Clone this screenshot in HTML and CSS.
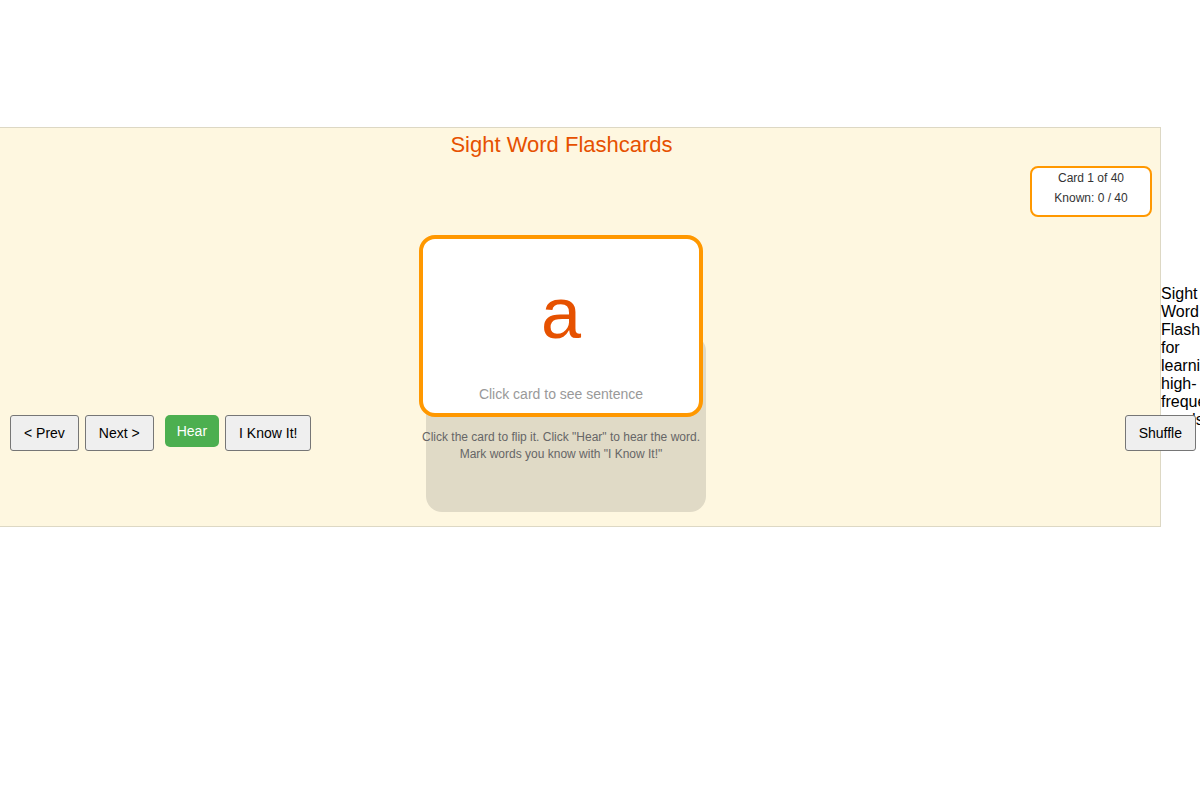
FILE: index.html
```html
<!DOCTYPE html>
<html lang="en">
<head>
  <meta charset="UTF-8">
  <meta name="viewport" content="width=device-width, initial-scale=1.0">
  <title>Sight Word Flashcards</title>
  <link rel="stylesheet" href="styles.css">
</head>
<body>
  <div class="page">
    <section class="panel">
      <h1 class="title">Sight Word Flashcards</h1>
      <div class="counter">
        <div>Card 1 of 40</div>
        <div>Known: 0 / 40</div>
      </div>
      <div class="play">
        <div class="controls">
          <button class="btn">&lt; Prev</button>
          <button class="btn">Next &gt;</button>
          <button class="btn hear">Hear</button>
          <button class="btn">I Know It!</button>
        </div>
        <div class="card-col">
          <div class="card">
            <div class="word">a</div>
            <div class="hint">Click card to see sentence</div>
          </div>
          <p class="help">Click the card to flip it. Click "Hear" to hear the word. Mark words you know with "I Know It!"</p>
        </div>
        <div class="controls right">
          <button class="btn">Shuffle</button>
        </div>
      </div>
    </section>
    <p class="tagline">Sight Word Flashcards for learning high-frequency words</p>
  </div>
</body>
</html>
```

FILE: styles.css
```css
html, body {
  margin: 0;
  padding: 0;
  overflow: hidden;
  background: #fff;
  font-family: "Liberation Sans", Arial, sans-serif;
}
.page {
  display: flex;
  align-items: flex-start;
  padding-top: 127px;
}
.panel {
  flex: none;
  box-sizing: border-box;
  width: 1199px;
  height: 400px;
  margin-left: -38px;
  background: #fef7e0;
  border: 1px solid #ddd8c4;
}
.title {
  margin: 4px 0 0;
  font-size: 22px;
  font-weight: normal;
  line-height: 25px;
  color: #e65100;
  text-align: center;
}
.counter {
  box-sizing: border-box;
  width: 122px;
  margin: 9px 8px 0 auto;
  padding: 0 0 7px;
  background: #fff;
  border: 2px solid #ff9800;
  border-radius: 8px;
  font-size: 12px;
  line-height: 20px;
  color: #333;
  text-align: center;
}
.play {
  display: grid;
  grid-template-columns: 409px 284px 1fr;
  margin: 18px -36px 0 47px;
}
.controls {
  position: relative;
  z-index: 1;
  display: flex;
  align-items: flex-start;
  gap: 6px;
  padding-top: 180px;
}
.controls.right {
  justify-content: flex-end;
}
.btn {
  box-sizing: border-box;
  height: 36px;
  padding: 0 13px;
  background: #efefef;
  border: 1px solid #767676;
  border-radius: 3px;
  font-family: "Liberation Sans", Arial, sans-serif;
  font-size: 14px;
  color: #000;
  cursor: pointer;
}
.hear {
  height: 32px;
  margin-left: 5px;
  padding: 0 12px;
  background: #4caf50;
  border: none;
  border-radius: 5px;
  color: #fff;
}
.card-col {
  position: relative;
  z-index: 0;
}
.card-col::before {
  content: "";
  position: absolute;
  z-index: -1;
  left: 7px;
  top: 100px;
  width: 280px;
  height: 177px;
  background: #e0dac6;
  border-radius: 16px;
}
.card {
  box-sizing: border-box;
  display: flex;
  flex-direction: column;
  height: 182px;
  padding-bottom: 11px;
  background: #fff;
  border: 4px solid #ff9800;
  border-radius: 16px;
  cursor: pointer;
}
.word {
  flex: 1;
  display: flex;
  align-items: center;
  justify-content: center;
  font-size: 72px;
  line-height: 72px;
  color: #e65100;
}
.hint {
  font-size: 14px;
  line-height: 16px;
  color: #999;
  text-align: center;
}
.help {
  margin: 12px 0 0;
  font-size: 12px;
  line-height: 17px;
  color: #666;
  text-align: center;
}
.tagline {
  flex: none;
  width: 39px;
  margin: 158px 0 0;
  font-size: 16px;
  line-height: 18px;
  color: #000;
}
```
